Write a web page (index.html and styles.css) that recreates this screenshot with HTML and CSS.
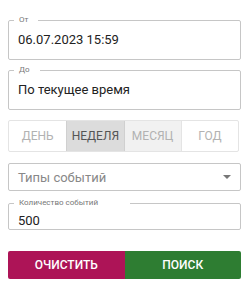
FILE: index.html
```html
<!DOCTYPE html>
<html lang="ru">
<head>
  <meta charset="UTF-8" />
  <title>Фильтр событий</title>
  <link rel="stylesheet" href="styles.css">
</head>
<body>
  <div class="panel">

    <!-- Period -->
    <fieldset class="field">
      <legend class="legend-short">От</legend>
      <div class="value">06.07.2023 15:59</div>
    </fieldset>

    <fieldset class="field field-to">
      <legend class="legend-short">До</legend>
      <div class="value">По текущее время</div>
    </fieldset>

    <div class="toggle-group">
      <span class="toggle">День</span>
      <span class="toggle active">Неделя</span>
      <span class="toggle hover">Месяц</span>
      <span class="toggle">Год</span>
    </div>

    <!-- Event types -->
    <div class="select">
      <span class="placeholder">Типы событий</span>
      <span class="caret"></span>
    </div>

    <fieldset class="field field-count">
      <legend class="legend-long">Количество событий</legend>
      <div class="value">500</div>
    </fieldset>

    <div class="actions">
      <button class="btn btn-clear">Очистить</button>
      <button class="btn btn-search">Поиск</button>
    </div>

  </div>
</body>
</html>
```

FILE: styles.css
```css
* {
  box-sizing: border-box;
  margin: 0;
  padding: 0;
  font-family: Roboto, 'Liberation Sans', sans-serif;
}

body {
  background: #fff;
  color: #222;
}

.panel {
  width: 250px;
  padding: 16px 9px 0 8px;
  display: flex;
  flex-direction: column;
}

.field {
  border: 1px solid #c6c6c6;
  border-radius: 2px;
  padding: 0 9px;
  min-inline-size: 0;
}

.field legend {
  font-size: 8px;
  line-height: 8px;
  color: #777;
  margin-left: -4px;
}

.legend-short {
  padding: 0 10px 0 5px;
}

.legend-long {
  padding: 0 32px 0 5px;
}

.value {
  font-size: 13px;
  line-height: 16px;
  padding: 8px 0 11px;
  color: #222;
}

.field-to {
  margin-top: 6px;
}

.toggle-group {
  margin: 10px 2px 0 0;
  height: 32px;
  display: grid;
  grid-template-columns: repeat(4, 1fr);
  border: 1px solid #e4e4e4;
  border-radius: 2px;
}

.toggle {
  display: flex;
  align-items: center;
  justify-content: center;
  text-transform: uppercase;
  font-size: 12px;
  color: #b2b2b2;
  border-left: 1px solid #e4e4e4;
}

.toggle:first-child {
  border-left: none;
}

.toggle.active {
  background: #dcdcdc;
  color: #555;
  border-left-color: #d0d0d0;
}

.toggle.hover {
  background: #f1f1f1;
  border-left-color: #d0d0d0;
}

.select {
  margin-top: 11px;
  height: 28px;
  border: 1px solid #c6c6c6;
  border-radius: 2px;
  padding: 0 9px;
  display: flex;
  align-items: center;
  justify-content: space-between;
}

.placeholder {
  font-size: 13px;
  color: #888;
}

.caret {
  width: 0;
  height: 0;
  border-left: 4px solid transparent;
  border-right: 4px solid transparent;
  border-top: 4px solid #777;
}

.field-count {
  margin-top: 8px;
}

.field-count .value {
  padding: 6px 0 0;
}

.actions {
  margin-top: 21px;
  display: grid;
  grid-template-columns: 1fr 1fr;
}

.btn {
  height: 28px;
  border: none;
  color: #fff;
  font-size: 12px;
  font-weight: 500;
  text-transform: uppercase;
  cursor: pointer;
}

.btn-clear {
  background: #ad1457;
  border-radius: 2px 0 0 2px;
}

.btn-search {
  background: #2e7d32;
  border-radius: 0 2px 2px 0;
}
```
